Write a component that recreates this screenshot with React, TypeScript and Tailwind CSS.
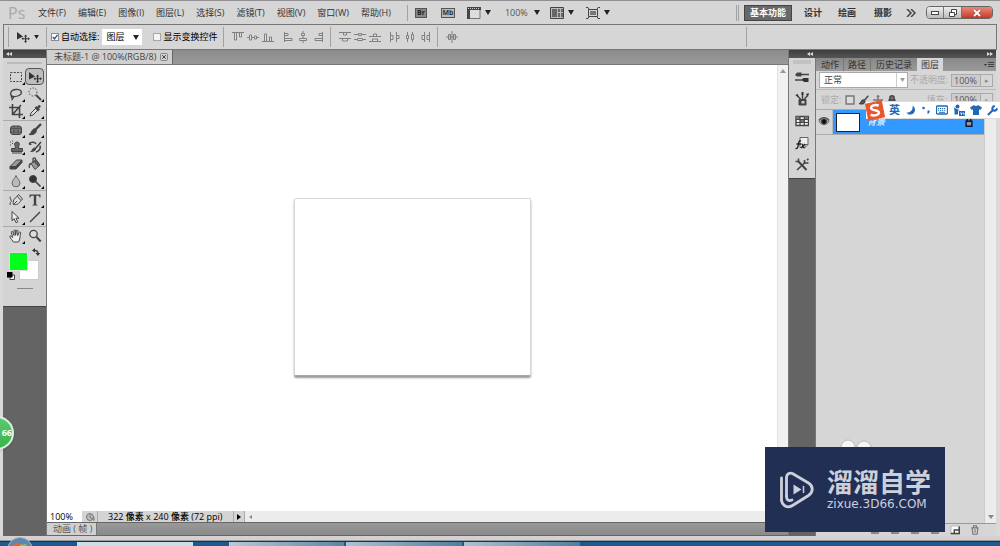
import React from 'react';
import clsx from 'clsx';

interface GlyphProps {
  size?: string;
  box?: string;
  children: React.ReactNode;
}

const Glyph: React.FC<GlyphProps> = ({ size = 'size-3.5', box = '0 0 14 14', children }) => (
  <svg viewBox={box} className={clsx('shrink-0', size)} fill="none" stroke="#444" strokeWidth="1" aria-hidden="true">
    {children}
  </svg>
);

const Caret = () => (
  <svg viewBox="0 0 6 5" className="w-1.5 h-[5px] shrink-0" fill="#222" aria-hidden="true">
    <path d="M0 0h6L3 5z" />
  </svg>
);

const MoveShape = () => (
  <g stroke="none" fill="#333">
    <path d="M1 2l6 4.600L1 9.400z" />
    <path d="M9.600 4.600l1.600 1.900h-1v1.800h1.900v-1L14 8.800l-1.900 1.500v-1h-1.900v1.900h1l-1.600 1.800L8 11.200h1V9.300H7.300v1L5.500 8.800l1.800-1.500v1H9V6.500H8z" />
  </g>
);

const menus = ['文件(F)', '编辑(E)', '图像(I)', '图层(L)', '选择(S)', '滤镜(T)', '视图(V)', '窗口(W)', '帮助(H)'];

const toolGroups = [
  [
    { name: '矩形选框', art: <rect x="1.500" y="2.500" width="11" height="9" strokeDasharray="2 1.300" /> },
    { name: '移动', art: <MoveShape />, active: true },
    { name: '套索', art: <path d="M4 9.500C0 8 1 3 7 2.500s7 4 3 6c-2 1-4 1.200-6 1zm0 0c-1.500-.8-2.500.8-1 1.500S5 10 4 9.500zm-.6 1.600c.2 1 0 1.500-.9 2.100" strokeWidth="1.300" /> },
    { name: '魔棒', art: <><circle cx="5" cy="5" r="4" strokeDasharray="1.500 1.500" /><path d="M8 8l5 5" strokeWidth="2" /></> },
    { name: '裁剪', art: <path d="M3.500 0v10.500H14M0 3.500h10.500V14M4 10l8-9" strokeWidth="1.600" /> },
    { name: '吸管', art: <><path d="M2 12l1-3 5-5 2 2-5 5z" fill="#ddd" /><path d="M7.500 3l3.500 3.500M9 5l3-3.500" strokeWidth="2.600" /></> },
  ],
  [
    { name: '修复画笔', art: <><rect x="1.500" y="3" width="11" height="8.500" rx="2.500" fill="#777" /><path d="M1 5.500h12M1 9h12M5 3v8.500M9 3v8.500" strokeWidth=".6" /></> },
    { name: '画笔', art: <><path d="M13 1L7 7" strokeWidth="2.400" /><path d="M7.500 6c1 1 1.300 2 .3 3.500C6.500 11.500 4 12 1 11.500c2-.8 2-2 3-3.700S6.500 5.500 7.500 6z" fill="#444" /></> },
    { name: '仿制图章', art: <><path d="M2.500 11.500v-3h3.800V6C5 4.500 5.500 2 8 2s3 2.500 1.700 4v2.500h3.800v3z" fill="#666" /><path d="M3 13h10M1 2h1M3 3.500h1M1 5h1M3 1h1" /></> },
    { name: '历史记录画笔', art: <><path d="M13 2L7 9M12 5.500c1 3-1 6-4 6.500M1 4c2-2.500 6-2 7 0" strokeWidth="1.500" /><path d="M6.500 7.500l1.500 2c-1 2-3 2.500-6 2.500 2-1 2-4 4.500-4.500zM1 2l3 3H1z" fill="#444" stroke="none" /></> },
    { name: '橡皮擦', art: <><path d="M1 9.500L7.500 3H13L7 9.500z" fill="#999" /><path d="M1 9.500h6v2.500H1zM7 9.500L13 3v2.500L7 12z" fill="#444" /></> },
    { name: '油漆桶', art: <><path d="M3 6.500l5-4 4 5.500-5 4.500z" fill="#999" /><path d="M5 6V2c0-1.500 2.500-1.500 2.500 0v4.500M3 6.500C1 7 1 9 1.500 11" strokeWidth="1.300" /><path d="M8 2.500L12 8l-2 1.800-4.200-5.500z" fill="#555" stroke="none" /></> },
    { name: '模糊', art: <path d="M7 1.500C6 4.500 3 6.500 3 9a4 3.800 0 008 0c0-2.500-3-4.500-4-7.500z" fill="#bbb" stroke="#666" /> },
    { name: '减淡', art: <><circle cx="5" cy="5" r="3.500" fill="#333" /><path d="M7.500 7.500l5 5" strokeWidth="1.700" /></> },
  ],
  [
    { name: '钢笔', art: <><path d="M4.500 11.500c-1-3 .5-6.500 4-8l3.500 4c-2 3.500-4.500 4.500-7.500 4zm0 0L8 8M8 3.500l1.500-2 4 4.500-1.500 1.500" fill="#ddd" /><path d="M1 12c0-4 2-2 1-5S0 5 2 4" /></> },
    { name: '横排文字', art: <path d="M1.500 1.500h11v3h-1c-.2-1.400-.6-1.700-1.800-1.700H8.200v7.900c0 .9.400 1.100 1.500 1.200v.7H4.300v-.7c1.200-.1 1.500-.3 1.500-1.200V2.800H4.300c-1.200 0-1.600.3-1.800 1.700h-1z" fill="#444" stroke="none" /> },
    { name: '路径选择', art: <path d="M3 1.500v9.200l2.200-2 1.800 4 1.800-.8L7 8.200h3z" fill="#eee" /> },
    { name: '直线', art: <path d="M2 12L12 2" strokeWidth="1.400" /> },
  ],
  [
    { name: '抓手', art: <path d="M4.500 13C3 11 1.800 9.500.8 7.800.6 6.800 2 6.500 3.600 8.500L2.400 3.300c0-1.200 1.300-1.200 1.600 0L5 6.500V1.800c0-1.200 1.600-1.200 1.600 0v4.500l.8-4.500c.3-1.200 1.700-.9 1.500.3L8.700 6.500l1.400-3c.6-1 1.800-.5 1.500.6C10.800 7 11.300 10.500 9.500 13z" fill="#eee" /> },
    { name: '缩放', art: <><circle cx="5.500" cy="5" r="3.700" fill="#ddd" strokeWidth="1.300" /><path d="M8.500 8l4.200 4.500" strokeWidth="2" /></> },
  ],
];

const alignGroups = [
  [
    <><path d="M0 1.500h12" /><path d="M2.500 2v7h2V2M7.500 2v4h2V2" fill="#ddd" /></>,
    <><path d="M0 6.500h12" /><path d="M2.500 4h2v5h-2zM7.500 5h2v3h-2z" fill="#ddd" /></>,
    <><path d="M0 10.500h12" /><path d="M2.500 10V3h2v7M7.500 10V6h2v4" fill="#ddd" /></>,
  ],
  [
    <><path d="M2.500 1v10" /><path d="M3 2.500h3v2H3M3 7.500h7v2H3" fill="#ddd" /></>,
    <><path d="M6 0v12" /><path d="M4.500 2.500h3v2h-3zM2.500 7.500h7v2h-7z" fill="#ddd" /></>,
    <><path d="M10.500 1v10" /><path d="M10 2.500H7v2h3M10 7.500H3v2h7" fill="#ddd" /></>,
  ],
  [
    <><path d="M0 1.500h12M0 7.500h12" /><path d="M4.500 2v2h3V2M3.500 8v2h5V8" fill="#ddd" /></>,
    <><path d="M0 3.500h12M0 8.500h12" /><path d="M4.500 2.500h3v2h-3zM3.500 7.500h5v2h-5z" fill="#ddd" /></>,
    <><path d="M0 5.500h12M0 10.500h12" /><path d="M4.500 5V3h3v2M3.500 10V8h5v2" fill="#ddd" /></>,
  ],
  [
    <><path d="M1.500 1v10M7.500 1v10" /><path d="M2 4.500h2v4H2M8 4.500h2v3H8" fill="#ddd" /></>,
    <><path d="M3.500 1v10M8.500 1v10" /><path d="M2.500 4.500h2v3h-2zM7.500 3.500h2v5h-2z" fill="#ddd" /></>,
    <><path d="M5.500 1v10M10.500 1v10" /><path d="M5 4.500H3v4h2M10 4.500H8v4h2" fill="#ddd" /></>,
  ],
  [<><path d="M6 0v12M0 6h12" /><path d="M2.500 3.500h2v5h-2zM7.500 3.500h2v5h-2z" fill="#bbb" /></>],
];

const dockIcons = [
  { name: '画笔预设', art: <><path d="M5 4.500h9" strokeWidth="1.500" /><path d="M0 5l2-2.500h4.500v4H2z" fill="#444" stroke="none" /><path d="M0 10h8" strokeWidth="1.500" /><path d="M8 8h5.500v4H9L7 10z" fill="#333" stroke="none" /></> },
  { name: '画笔', art: <><path d="M4 7.500h7V13H4z" fill="#444" /><path d="M6.500 9h3v2.500h-3z" fill="#ccc" stroke="none" /><path d="M5.500 7L2 3.500M7.500 7V2M9.500 7L12.500 3.500" strokeWidth="1.500" /><path d="M0 3l3-1 .5 3zM6.500 0h2v3h-2zM11 2l3-1-1 4z" fill="#333" stroke="none" /></> },
  { name: '色板', art: <><path d="M1 2.500h12.500v9H1z" fill="#eee" strokeWidth="1.400" /><path d="M1 2.500h4v3H1zM9 2.500h4v3H9zM5 5.500h4v3H5z" fill="#777" stroke="none" /><path d="M1 5.500h12.500M1 8.500h12.500M5 2.500v9M9.300 2.500v9" strokeWidth="1.200" /></> },
  { name: '样式', art: <><path d="M5 1.500h8v7l-3 3H5z" fill="#eee" stroke="#666" /><path d="M13 8.500h-3v3" stroke="#666" /><path d="M6 5c-2-1-2.200 1-2.600 3.500S2.500 13 .5 12.500M1.500 8H6M6.500 8c2 0 1 4 3 4M10 8L6 12" stroke="#222" strokeWidth="1.300" /></> },
  { name: '工具预设', art: <><path d="M3 3l8.500 9" strokeWidth="2" /><path d="M10 4.500L2 12" strokeWidth="1.600" /><path d="M.5 3.500h3v-3M9.500 2v3h4M12 2l1.500-1" strokeWidth="1.600" /></> },
];

const Rule = ({ className = '' }: { className?: string }) => (
  <span className={clsx('w-px shrink-0 bg-[#a2a2a2]', className)} />
);

const MenuBar = () => (
  <header className="flex h-6 shrink-0 items-center border-t border-[#8f8f94] pl-2 pr-[7px] text-[#333]">
    <span className="w-[30px] font-['Open_Sans'] text-[16px] leading-4 text-[#a9a9a9]">Ps</span>
    <nav className="flex gap-3">
      {menus.map((m) => (
        <button key={m} className="whitespace-nowrap">{m}</button>
      ))}
    </nav>
    <Rule className="ml-4 mr-[7px] h-4" />
    <button className="mr-3.5 h-2.5 w-3 border border-[#555] bg-[#888] text-[7px] font-bold leading-[8px] text-[#222]">Br</button>
    <button className="mr-3 h-2.5 w-3.5 border border-[#555] bg-[#bbb] text-[7px] font-bold leading-[8px]">Mb</button>
    <button className="mr-3.5 flex items-center gap-1" aria-label="查看额外内容">
      <Glyph>
        <path d="M1 1.500h12v11H1z" fill="#ddd" stroke="#777" />
        <path d="M0 1h14v3H0zM0 4h3v9H0z" fill="#444" stroke="none" />
        <path d="M1 2.500h12" stroke="#ccc" strokeDasharray="1 1" />
      </Glyph>
      <Caret />
    </button>
    <button className="mr-2.5 flex items-center gap-1.5 text-[#555]">100% <Caret /></button>
    <button className="mr-3 flex items-center gap-1" aria-label="排列文档">
      <Glyph>
        <path d="M.5 1.500h13v11H.5z" fill="#bbb" />
        <path d="M2 3h5v8H2zM8 3h2v3H8zM11 3h2v3h-2zM8 7h2v4H8zM11 7h2v4h-2z" fill="#666" stroke="none" />
      </Glyph>
      <Caret />
    </button>
    <button className="flex items-center gap-1" aria-label="屏幕模式">
      <Glyph>
        <path d="M2.500 3.500h9v7h-9z" />
        <path d="M4 5h6v4H4z" fill="#777" stroke="none" />
        <path d="M0 1.500h2l1 2M14 1.500h-2l-1 2M0 12.500h2l1-2M14 12.500h-2l-1-2" />
      </Glyph>
      <Caret />
    </button>

    <div className="ml-auto flex items-center font-bold">
      <Rule className="mr-px h-4" />
      <Rule className="mr-[5px] h-4" />
      <button className="h-4 w-12 border border-[#444] bg-[#686868] text-white">基本功能</button>
      <button className="ml-3">设计</button>
      <button className="ml-4">绘画</button>
      <button className="ml-[18px]">摄影</button>
      <button className="ml-3.5" aria-label="更多工作区">
        <Glyph size="w-2.5 h-2" box="0 0 10 8"><path d="M1 0l4 4-4 4M5 0l4 4-4 4" strokeWidth="1.500" /></Glyph>
      </button>
      <div className="ml-2.5 flex h-[13px] overflow-hidden rounded-sm border border-[#666]">
        <button className="flex w-[17px] items-center justify-center border-r border-[#777] bg-linear-to-b from-[#eee] to-[#bbb]" aria-label="最小化">
          <span className="h-1 w-2 border border-[#444] bg-white" />
        </button>
        <button className="flex w-[18px] items-center justify-center border-r border-[#777] bg-linear-to-b from-[#eee] to-[#bbb]" aria-label="还原">
          <Glyph size="size-2.5" box="0 0 10 10"><path d="M3.500 1.500h5v5h-5z" fill="#fff" /><path d="M1.500 4.500h5v4h-5z" fill="#fff" /></Glyph>
        </button>
        <button className="flex w-[30px] items-center justify-center bg-linear-to-b from-[#e48a7c] to-[#c93420]" aria-label="关闭">
          <Glyph size="w-2.5 h-2" box="0 0 10 8"><path d="M2 1l6 6M8 1L2 7" stroke="#933" strokeWidth="3" /><path d="M2 1l6 6M8 1L2 7" stroke="#fff" strokeWidth="2" /></Glyph>
        </button>
      </div>
    </div>
  </header>
);

const OptionsBar = () => (
  <div className="mx-[3px] flex h-[26px] shrink-0 items-center border border-[#777] bg-[#d6d6d6] text-black">
    <Rule className="ml-1 h-5" />
    <button className="ml-[7px] flex items-center gap-1" aria-label="移动工具">
      <Glyph><MoveShape /></Glyph>
      <svg viewBox="0 0 6 5" className="h-1 w-[5px]" fill="#222"><path d="M0 0h6L3 5z" /></svg>
    </button>
    <Rule className="ml-[7px] mr-1 h-5" />
    <label className="flex items-center gap-0.5 whitespace-nowrap">
      <span className="grid size-2 place-items-center">
        <input type="checkbox" defaultChecked className="col-start-1 row-start-1 size-2 appearance-none border border-[#8a8a8a] bg-white" />
        <svg viewBox="0 0 8 8" className="pointer-events-none col-start-1 row-start-1 size-2" fill="none" stroke="#2f4f8f" strokeWidth="1.300"><path d="M1.800 4l1.700 2 3-4.200" /></svg>
      </span>
      自动选择:
    </label>
    <span className="ml-[3px] grid w-10 items-center">
      <select aria-label="自动选择" className="col-start-1 row-start-1 h-4 w-10 appearance-none bg-white pl-1 text-[9px]">
        <option>图层</option>
        <option>组</option>
      </select>
      <span className="pointer-events-none col-start-1 row-start-1 justify-self-end pr-[3px]"><Caret /></span>
    </span>
    <label className="ml-[11px] flex items-center gap-0.5 whitespace-nowrap">
      <input type="checkbox" className="size-2 appearance-none border border-[#a5a5a5] bg-[#f4f4f4]" />
      显示变换控件
    </label>
    <Rule className="ml-1.5 mr-2 h-5" />
    <div className="flex items-center">
      {alignGroups.map((group, i) => (
        <React.Fragment key={i}>
          {(i === 2 || i === 4) && <Rule className="ml-1.5 mr-2 h-5" />}
          <div className={clsx('flex gap-[3px]', (i === 1 || i === 3) && 'ml-2')}>
            {group.map((art, j) => (
              <button key={j} className="grid place-items-center" aria-label={`对齐 ${i + 1}-${j + 1}`}>
                <svg viewBox="0 0 12 12" className="size-3" fill="none" stroke="#808080">{art}</svg>
              </button>
            ))}
          </div>
        </React.Fragment>
      ))}
    </div>
    <Rule className="ml-auto mr-[249px] h-5" />
  </div>
);

const Chevrons = ({ left = false }: { left?: boolean }) => (
  <svg viewBox="0 0 6 4" className="h-1 w-1.5" fill="#ddd" aria-hidden="true">
    <path d={left ? 'M3 0v4L0 2zM6 0v4L3 2z' : 'M0 0v4l3-2zM3 0v4l3-2z'} />
  </svg>
);

const ToolBox = () => (
  <aside className="flex w-11 shrink-0 flex-col border-r border-[#777] bg-[#646464]">
    <div className="flex h-2 items-center bg-linear-to-b from-[#3e3e3e] to-[#555] pl-[3px]"><Chevrons left /></div>
    <div className="border-b border-[#444] bg-[#d4d4d4] pb-[17px]">
      <div className="mx-1 mb-1 mt-1 h-0.5 bg-[#bcbcbc]" />
      {toolGroups.map((group, i) => (
        <div key={i} className={clsx('grid grid-cols-2 pl-[3px] pr-0.5', i > 0 && 'mt-px border-t border-[#aaa]')}>
          {group.map((t) => (
            <button
              key={t.name}
              aria-label={t.name}
              className={clsx(
                'relative grid h-[17px] place-items-center rounded-sm',
                'active' in t && 'border border-[#555] bg-[#bdbdbd]'
              )}
            >
              <Glyph>{t.art}</Glyph>
              {t.name !== '移动' && t.name !== '缩放' && (
                <svg viewBox="0 0 3 3" className="absolute bottom-0 right-0 size-[3px]"><path d="M3 0v3H0z" /></svg>
              )}
            </button>
          ))}
        </div>
      ))}
      <div className="relative ml-1 mt-1 h-8 w-8">
        <button aria-label="背景色" className="absolute bottom-0 right-0 h-5 w-5 border border-[#ccc] bg-white" />
        <button aria-label="前景色" className="absolute left-0.5 top-1 size-[19px] border border-[#ddd] bg-[#00ff1a]" />
        <button aria-label="切换颜色" className="absolute -right-px top-0">
          <Glyph size="size-2" box="0 0 8 8"><path d="M2 2.500c3-.5 4 1 4 3.500" strokeWidth="1.500" /><path d="M0 2.500L3 0v4.500zM6 8L3.500 5h4.700z" fill="#333" stroke="none" /></Glyph>
        </button>
        <button aria-label="默认颜色" className="absolute bottom-0 left-0">
          <Glyph size="size-2" box="0 0 8 8"><path d="M3 3h4.500v4.500H3z" fill="#fff" /><path d="M0 0h5.500v5.500H0z" fill="#000" stroke="none" /></Glyph>
        </button>
      </div>
      <div className="mx-auto mt-2 h-px w-4 bg-[#888]" />
    </div>
  </aside>
);

const Workspace = () => (
  <main className="flex min-w-0 flex-1 flex-col">
    <div className="flex h-[15px] shrink-0 border-b border-[#777] bg-linear-to-b from-[#8c8c8c] to-[#999]">
      <div className="flex items-center gap-1 border-r border-[#666] bg-[#d0d0d0] pl-[7px] pr-1 text-[#444]">
        <span className="whitespace-nowrap">未标题-1 @ 100%(RGB/8)</span>
        <button aria-label="关闭文档">
          <Glyph size="size-2" box="0 0 8 8"><rect x=".5" y=".5" width="7" height="7" rx="1" stroke="#888" /><path d="M2.200 2.200l3.600 3.600M5.800 2.200L2.200 5.800" /></Glyph>
        </button>
      </div>
    </div>
    <div className="flex min-h-0 flex-1 bg-white">
      <div className="flex flex-1 items-center justify-center">
        <div className="mb-0.5 h-[178px] w-[237px] rounded-xs border border-[#d8d8d8] border-b-[#aaa] bg-white shadow-[0_2px_2px_#999]" />
      </div>
      <div className="flex w-[11px] justify-center border-l border-[#e2e2e2] bg-[#f1f1f1] pt-1">
        <svg viewBox="0 0 6 4" className="h-1 w-1.5" fill="#999"><path d="M0 4h6L3 0z" /></svg>
      </div>
    </div>
    <div className="flex h-[11px] shrink-0 items-center bg-[#ececec] text-black">
      <input aria-label="缩放比例" defaultValue="100%" className="h-full w-[35px] bg-white pl-[3px]" />
      <div className="flex h-full w-4 items-center justify-center border-r border-[#aaa] bg-[#d4d4d4]">
        <Glyph size="size-2.5" box="0 0 10 10"><circle cx="5" cy="5" r="3.500" fill="#bbb" stroke="#777" /><path d="M5 2.500V5l4 3.500V5" stroke="#777" /></Glyph>
      </div>
      <div className="flex h-full items-center whitespace-nowrap border-r border-[#aaa] bg-[#d4d4d4] px-2.5 font-medium">322 像素 x 240 像素 (72 ppi)</div>
      <button className="flex h-full w-[11px] items-center justify-center border-r border-[#aaa] bg-[#d4d4d4]" aria-label="状态选项">
        <svg viewBox="0 0 4 6" className="h-1.5 w-1"><path d="M0 0v6l4-3z" /></svg>
      </button>
      <svg viewBox="0 0 3 4" className="ml-1 h-1 w-[3px]" fill="#888"><path d="M3 0v4L0 2z" /></svg>
    </div>
    <div className="flex h-3.5 shrink-0 border-y border-[#666] bg-linear-to-b from-[#999] to-[#8a8a8a]">
      <button className="whitespace-nowrap border-r border-[#777] bg-[#d0d0d0] pl-1.5 pr-1 text-[#555]">动画 ( 帧 )</button>
    </div>
  </main>
);

const SogouBar = () => (
  <div className="absolute right-0 top-[101px] flex h-[18px] w-[134px] items-center gap-[5px] border-y border-[#ddd] bg-white pl-[23px] text-[#2268b4]">
    <svg viewBox="0 0 20 20" className="absolute -left-0.5 -top-0.5 size-[21px]" aria-label="S">
      <path d="M1.500 4L16.500.7 19.500 16 4.500 19.300z" fill="#e9562b" stroke="#e9562b" strokeLinejoin="round" />
      <path d="M14 5.200C9.500 4 5.800 5.800 7 8.300c1 2 6.600 1 7.200 3.400.5 2.600-4.500 3.700-8 2.500" fill="none" stroke="#fff" strokeWidth="2.300" />
    </svg>
    <span className="w-3 text-[11px] font-bold leading-3">英</span>
    <svg viewBox="0 0 10 10" className="size-2.5" fill="#2268b4"><path d="M6.500.5c3.500 2 3.500 8-1.500 9C3 9.800 1.300 9 .5 7.500 4.500 8 7.500 4.500 6.500.5z" /></svg>
    <svg viewBox="0 0 10 10" className="size-2.5" fill="#2268b4"><circle cx="2.500" cy="3" r="1.300" /><path d="M6.500 5.500h2.200C8.700 7.500 8 8.500 6.500 9z" /></svg>
    <svg viewBox="0 0 12 10" className="h-2.5 w-3" fill="none" stroke="#2268b4"><rect x=".5" y="1" width="11" height="8" rx="1" strokeWidth="1.300" /><path d="M2 3.500h8M2 5.300h8" strokeDasharray="1.200 .8" /><path d="M3 7.300h6" /></svg>
    <svg viewBox="0 0 12 12" className="size-3" fill="#2268b4"><circle cx="4.500" cy="2.500" r="2" /><path d="M1 3.500l4 2 2 1H5v4H1.500V7zM6 7h6v5H6z" /><path d="M7 9h1.500v2M9.500 9H11v2" fill="none" stroke="#fff" strokeWidth=".8" /></svg>
    <svg viewBox="0 0 12 10" className="h-2.5 w-3" fill="#2268b4"><path d="M4 0c1 1.200 3 1.200 4 0l4 2.500-1.500 2.500L9 4.300V10H3V4.300L1.500 5 0 2.500z" /></svg>
    <svg viewBox="0 0 12 12" className="size-[11px]" fill="none" stroke="#2268b4" strokeWidth="2.200"><path d="M1 11l5.500-5.500" /><path d="M8.500 1C6 1.500 5 4 6.500 5.500S10.500 6 11 3.500" /></svg>
  </div>
);

const LayersPanel = () => (
  <section className="flex w-[180px] shrink-0 flex-col bg-[#d6d6d6]">
    <div className="flex h-[13px] shrink-0 items-stretch bg-linear-to-b from-[#888] to-[#9a9a9a] text-[#333]">
      <button className="border-r border-[#777] pl-[5px] pr-1">动作</button>
      <button className="border-r border-[#777] px-1">路径</button>
      <button className="px-[5px]">历史记录</button>
      <button className="bg-[#d6d6d6] px-1">图层</button>
      <button className="ml-auto mr-0.5" aria-label="面板菜单">
        <Glyph size="w-2.5 h-1.5" box="0 0 10 6"><path d="M0 2h3L1.500 4z" fill="#333" stroke="none" /><path d="M4 .5h6M4 2.500h6M4 4.500h6" /></Glyph>
      </button>
    </div>
    <div className="flex h-[19px] shrink-0 items-center border-b border-[#bbb] px-[3px]">
      <span className="grid w-[89px] items-center">
        <select aria-label="混合模式" className="col-start-1 row-start-1 h-4 w-full appearance-none border border-[#aaa] bg-white pl-1 text-[9px] text-[#444]">
          <option>正常</option>
        </select>
        <span className="pointer-events-none col-start-1 row-start-1 flex h-3.5 w-3 items-center justify-center justify-self-end border-l border-[#ccc]">
          <svg viewBox="0 0 6 5" className="h-1 w-[5px]" fill="#999"><path d="M0 0h6L3 5z" /></svg>
        </span>
      </span>
      <label htmlFor="opacity" className="ml-0.5 whitespace-nowrap text-[#aaa]">不透明度:</label>
      <input id="opacity" defaultValue="100%" className="ml-auto h-[13px] w-[30px] border border-[#aaa] bg-[#ccc] pl-0.5 text-[#555]" />
      <button className="h-[13px] w-3 border border-l-0 border-[#aaa] text-[7px] text-[#888]" aria-label="调整不透明度">▸</button>
    </div>
    <div className="flex h-5 shrink-0 items-center border-b border-[#aaa] pl-[5px] pr-[3px] text-[#aaa]">
      <span>锁定:</span>
      <Glyph size="ml-1 size-2.5"><path d="M1.500 1.500h11v11h-11z" fill="#ddd" stroke="#777" strokeWidth="2" /></Glyph>
      <Glyph size="ml-1 size-2.5"><path d="M13 1L7 8M6 7c-3 0-2 4-5 5 4 1 6 0 7-3z" fill="#666" strokeWidth="2" /></Glyph>
      <Glyph size="ml-1 size-2.5"><path d="M7 0v14M0 7h14M5 2h4M5 12h4" strokeWidth="2" stroke="#777" /></Glyph>
      <Glyph size="ml-1 size-2.5"><path d="M3 7h8v6H3zM4 7V4c0-4 6-4 6 0v3" fill="#777" strokeWidth="2" /></Glyph>
      <label htmlFor="fill" className="ml-auto mr-1">填充:</label>
      <input id="fill" defaultValue="100%" className="h-[13px] w-[30px] border border-[#aaa] bg-[#ccc] pl-0.5 text-[#555]" />
      <button className="h-[13px] w-3 border border-l-0 border-[#aaa] text-[7px]" aria-label="调整填充">▸</button>
    </div>
    <div className="flex min-h-0 flex-1">
      <div className="flex-1">
        <div className="flex h-[25px] items-center border-b border-[#aaa]">
          <button className="grid h-full w-[17px] place-items-center border-r border-[#bbb]" aria-label="显示图层">
            <Glyph size="size-3"><path d="M1 6.500C4 2 10 2 13 6.500 10 11.500 4 11.500 1 6.500z" fill="#aaa" stroke="#777" /><circle cx="7" cy="6.500" r="3" fill="#111" /><path d="M1 5c3-4 9-4 12 0" strokeWidth="1.500" /></Glyph>
          </button>
          <div className="flex h-full flex-1 items-center bg-[#3399ff] pl-[3px] pr-2.5 text-white">
            <span className="h-[19px] w-6 border border-[#222] bg-white" />
            <span className="ml-[7px] italic">背景</span>
            <Glyph size="ml-auto size-2.5"><path d="M3 6h8v7H3z" fill="#999" stroke="#113" strokeWidth="2" /><path d="M4.500 6V3c0-2 5-2 5 0v3" stroke="#113" strokeWidth="2" /></Glyph>
          </div>
        </div>
      </div>
      <div className="flex w-3 items-end justify-center border-l border-[#ccc] bg-[#ececec] pb-1">
        <svg viewBox="0 0 6 4" className="h-1 w-1.5" fill="#888"><path d="M0 0h6L3 4z" /></svg>
      </div>
    </div>
    <div className="flex h-[13px] shrink-0 items-center justify-end gap-2.5 border-t border-[#999] pr-4">
      {['fx', '蒙版', '调整', '组'].map((name) => (
        <button key={name} aria-label={name}><Glyph size="size-2.5"><path d="M2 4h10v8H2zM2 8h10" fill="#888" stroke="#777" /></Glyph></button>
      ))}
      <button aria-label="新建图层"><Glyph size="size-2.5"><path d="M1.500 1.500h11v11h-11z" fill="#fff" stroke="#aaa" /><path d="M1 12h12V2M6 12V7h6" strokeWidth="2" /></Glyph></button>
      <button aria-label="删除图层"><Glyph size="size-2.5"><path d="M2 4h10M5 3V1h4v2M3 4l1 9h6l1-9M7 6v5" strokeWidth="1.600" stroke="#777" /></Glyph></button>
    </div>
  </section>
);

const RightDock = () => (
  <aside className="flex shrink-0 flex-col border-l border-[#777]">
    <div className="flex h-2 shrink-0 items-center bg-linear-to-b from-[#3e3e3e] to-[#555]">
      <span className="w-[26px] pl-[18px]"><Chevrons left /></span>
      <span className="ml-auto pr-[3px]"><Chevrons /></span>
    </div>
    <div className="flex min-h-0 flex-1">
      <div className="w-[27px] border-r border-[#777] bg-[#646464]">
        <div className="border-b border-[#444] bg-[#d4d4d4] pb-0.5 pt-0.5">
          <div className="mx-1 mb-0.5 h-1 bg-[#c2c2c2]" />
          {dockIcons.map((d) => (
            <button key={d.name} aria-label={d.name} className="grid h-[22px] w-full place-items-center">
              <Glyph>{d.art}</Glyph>
            </button>
          ))}
        </div>
      </div>
      <LayersPanel />
    </div>
  </aside>
);

const TaskBar = () => (
  <footer className="relative flex h-[5px] shrink-0 gap-0.5 border-t border-[#1d3347] bg-[#1c5a8d] pl-[77px]">
    <span className="h-full w-[116px] bg-[#c9dfec]" />
    <span className="mr-8" />
    <span className="h-full w-[115px] bg-linear-to-r from-[#b5cbd8] to-[#5688a8]" />
    <span className="h-full w-[116px] bg-linear-to-r from-[#a9c5d5] to-[#4c7ea1]" />
    <span className="h-full w-[116px] bg-linear-to-r from-[#a9c5d5] to-[#4c7ea1]" />
    <svg viewBox="0 0 26 9" className="absolute bottom-0 left-[7px] h-[9px] w-[26px]" aria-hidden="true">
      <circle cx="13" cy="13" r="12.500" fill="#5c86ab" stroke="#9cb8cf" />
      <path d="M6 9c1-3 4-4 6-3v3z" fill="#e8632b" />
      <path d="M13 7c2 1 5 1 7-.5L19 9h-6z" fill="#9ac43c" />
    </svg>
  </footer>
);

const Watermark = () => (
  <div className="absolute bottom-3.5 right-[55px] flex h-[85px] w-[180px] items-center gap-3 bg-[#222f55] pl-3.5 text-[#ccd0da]">
    <svg viewBox="0 0 36 38" className="h-[38px] w-9 shrink-0" fill="none" stroke="#ccd0da" strokeWidth="2.800" strokeLinecap="round">
      <path d="M2.500 7v22" />
      <path d="M7.500 25V6.500c0-3.500 3-5 6-4l16 9.500c5 3 5 9 0 12.500L13.500 34.500c-5 3-10 .5-11-5" />
      <path d="M7.500 25c0 5 3 5 5.500 4" />
      <path d="M14.500 13.500v10l8-5z" fill="#ccd0da" stroke="none" />
      <path d="M24.500 15.500v6" strokeWidth="1.500" />
    </svg>
    <div className="pb-1">
      <p className="whitespace-nowrap text-[26px] font-bold leading-8">溜溜自学</p>
      <p className="whitespace-nowrap font-['DejaVu_Sans'] text-[12px] leading-3">zixue.3D66.COM</p>
    </div>
  </div>
);

export default function App() {
  return (
    <div className="relative flex h-screen flex-col overflow-hidden bg-[#d6d6d6] font-['Open_Sans','Noto_Sans_CJK_SC',sans-serif] text-[9px] leading-3">
      <MenuBar />
      <OptionsBar />
      <div className="flex min-h-0 flex-1 border-l-[3px] border-r-4 border-[#d9d9d9]">
        <ToolBox />
        <Workspace />
        <RightDock />
      </div>
      <div className="h-[5px] shrink-0 border-b border-[#999] bg-[#d5d1d3]" />
      <TaskBar />

      <SogouBar />
      <div className="absolute -left-5 top-[416px] flex size-[34px] items-center justify-end rounded-full border-2 border-[#d9f2dc] bg-linear-to-b from-[#5cc96d] to-[#36b44c] font-bold text-white shadow">
        66
      </div>
      <svg viewBox="0 0 32 10" className="absolute bottom-[97px] right-[128px] h-2.5 w-8" fill="#f6f6f6" stroke="#bbb" aria-hidden="true">
        <circle cx="8" cy="8" r="7" />
        <circle cx="24" cy="9" r="7" />
      </svg>
      <Watermark />
    </div>
  );
}
